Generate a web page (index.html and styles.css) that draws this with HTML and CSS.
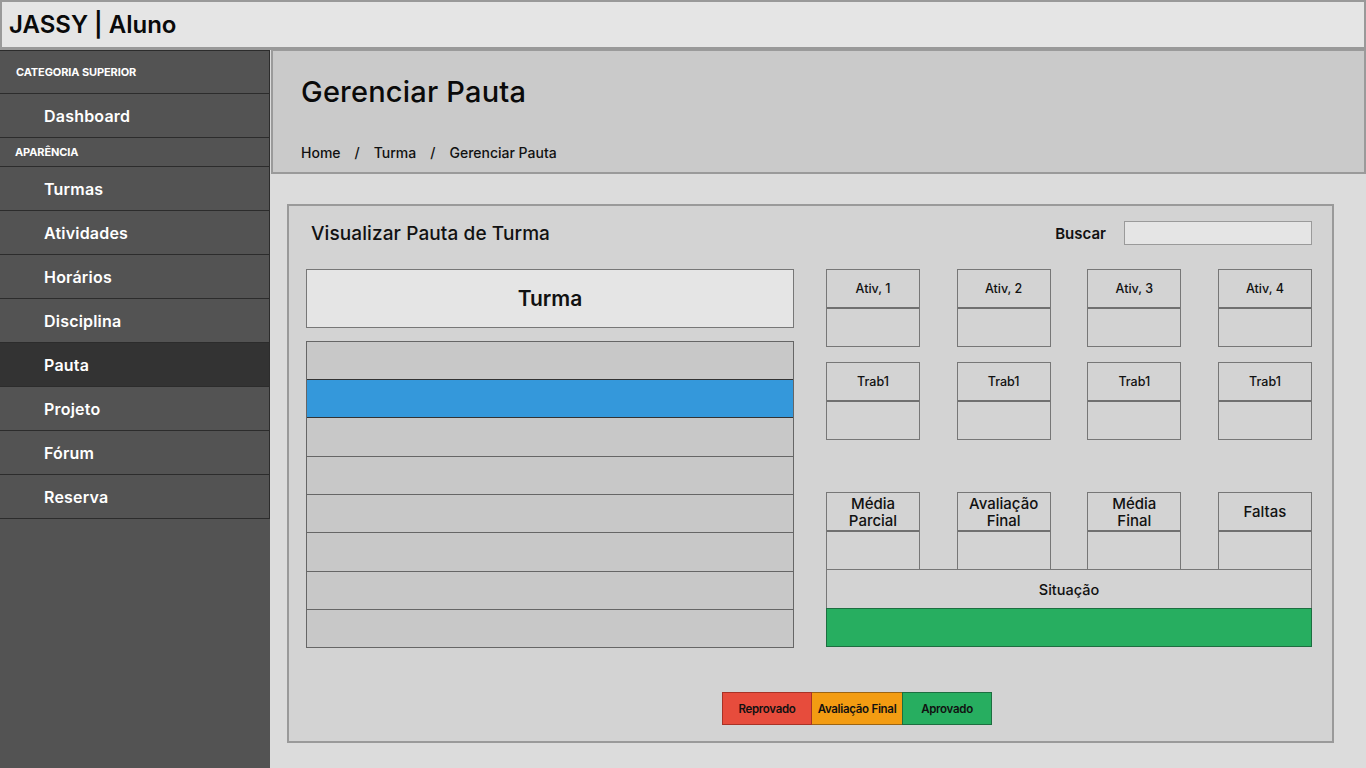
FILE: index.html
```html
<!DOCTYPE html>
<html lang="pt">
<head>
<meta charset="utf-8">
<title>JASSY | Aluno</title>
<link rel="stylesheet" href="styles.css">
</head>
<body>
<header class="topbar">JASSY | Aluno</header>
<div class="layout">
  <nav class="sidebar">
    <div class="cat cat-tall">CATEGORIA SUPERIOR</div>
    <a class="item">Dashboard</a>
    <div class="cat">APARÊNCIA</div>
    <a class="item">Turmas</a>
    <a class="item">Atividades</a>
    <a class="item">Horários</a>
    <a class="item">Disciplina</a>
    <a class="item active">Pauta</a>
    <a class="item">Projeto</a>
    <a class="item">Fórum</a>
    <a class="item">Reserva</a>
  </nav>
  <main class="main">
    <section class="page-head">
      <h1 class="page-title">Gerenciar Pauta</h1>
      <div class="crumbs"><span>Home</span><span class="sep">/</span><span>Turma</span><span class="sep">/</span><span>Gerenciar Pauta</span></div>
    </section>
    <section class="card">
      <div class="card-head">
        <h2 class="card-title">Visualizar Pauta de Turma</h2>
        <label class="search">Buscar <span class="search-input"></span></label>
      </div>
      <div class="card-body">
        <div class="left">
          <div class="turma-head">Turma</div>
          <div class="list">
            <div class="row"></div>
            <div class="row selected"></div>
            <div class="row"></div>
            <div class="row"></div>
            <div class="row"></div>
            <div class="row"></div>
            <div class="row"></div>
            <div class="row"></div>
          </div>
        </div>
        <div class="right">
          <div class="cells">
            <div class="cell"><div class="cell-head">Ativ, 1</div><div class="cell-val"></div></div>
            <div class="cell"><div class="cell-head">Ativ, 2</div><div class="cell-val"></div></div>
            <div class="cell"><div class="cell-head">Ativ, 3</div><div class="cell-val"></div></div>
            <div class="cell"><div class="cell-head">Ativ, 4</div><div class="cell-val"></div></div>
          </div>
          <div class="cells cells-2">
            <div class="cell"><div class="cell-head">Trab1</div><div class="cell-val"></div></div>
            <div class="cell"><div class="cell-head">Trab1</div><div class="cell-val"></div></div>
            <div class="cell"><div class="cell-head">Trab1</div><div class="cell-val"></div></div>
            <div class="cell"><div class="cell-head">Trab1</div><div class="cell-val"></div></div>
          </div>
          <div class="cells cells-3">
            <div class="cell"><div class="cell-head big">Média<br>Parcial</div><div class="cell-val"></div></div>
            <div class="cell"><div class="cell-head big">Avaliação<br>Final</div><div class="cell-val"></div></div>
            <div class="cell"><div class="cell-head big">Média<br>Final</div><div class="cell-val"></div></div>
            <div class="cell"><div class="cell-head big">Faltas</div><div class="cell-val"></div></div>
          </div>
          <div class="situacao">Situação</div>
          <div class="status status-ok"></div>
        </div>
      </div>
      <div class="legend">
        <span class="tag tag-red">Reprovado</span><span class="tag tag-orange">Avaliação Final</span><span class="tag tag-green">Aprovado</span>
      </div>
    </section>
  </main>
</div>
</body>
</html>
```
FILE: styles.css
```css
* { box-sizing: border-box; }
html, body { margin: 0; padding: 0; }
body {
  width: 1366px;
  height: 768px;
  overflow: hidden;
  background: #dcdcdc;
  font-family: "Inter", "Noto Sans", sans-serif;
  color: #111;
}
.topbar {
  height: 50px;
  background: #e5e5e5;
  border: 2px solid #999;
  border-bottom-width: 3px;
  padding-left: 7px;
  display: flex;
  align-items: center;
  font-size: 24px;
  font-weight: 600;
  color: #0a0a0a;
}
.layout {
  display: flex;
  height: 718px;
}
.sidebar {
  width: 270px;
  flex: none;
  background: #535353;
  display: flex;
  flex-direction: column;
}
.cat, .item {
  border: 1px solid #2c2c2c;
  border-left: 0;
  margin-top: -1px;
  color: #fff;
  display: flex;
  align-items: center;
  width: 270px;
}
.cat {
  height: 30px;
  padding-left: 15px;
  font-size: 11px;
  font-weight: 700;
  letter-spacing: -0.1px;
}
.cat:first-child { margin-top: 0; }
.cat-tall { height: 44px; padding-left: 16px; }
.item {
  height: 45px;
  padding-left: 44px;
  font-size: 16px;
  font-weight: 600;
  letter-spacing: 0.2px;
}
.item.active { background: #333; }
.main {
  flex: 1;
  display: flex;
  flex-direction: column;
}
.page-head {
  margin-left: 1px;
  height: 124px;
  background: #cacaca;
  border: 2px solid #9a9a9a;
  border-top-width: 1px;
  padding: 23px 0 0 28px;
}
.page-title {
  margin: 0;
  font-size: 29px;
  font-weight: 500;
  letter-spacing: 0.2px;
  line-height: 36px;
  color: #0a0a0a;
}
.crumbs {
  margin-top: 34px;
  font-size: 14px;
  font-weight: 500;
  display: flex;
  gap: 14px;
}
.card {
  margin: 30px 32px 25px 17px;
  flex: 1;
  background: #d3d3d3;
  border: 2px solid #9a9a9a;
  padding: 15px 20px 0 17px;
  display: flex;
  flex-direction: column;
}
.card-head {
  height: 24px;
  display: flex;
  align-items: center;
  justify-content: space-between;
  margin-bottom: 24px;
}
.card-title {
  margin: 0 0 0 5px;
  font-size: 19px;
  font-weight: 500;
  letter-spacing: 0.1px;
  color: #111;
}
.search {
  display: flex;
  align-items: center;
  gap: 18px;
  font-size: 15px;
  font-weight: 600;
}
.search-input {
  width: 188px;
  height: 24px;
  background: #e5e5e5;
  border: 1px solid #9a9a9a;
}
.card-body {
  display: flex;
  gap: 32px;
}
.left { width: 488px; }
.turma-head {
  height: 59px;
  background: #e5e5e5;
  border: 1px solid #777;
  display: flex;
  align-items: center;
  justify-content: center;
  font-size: 21px;
  font-weight: 600;
  margin-bottom: 13px;
}
.list {
  border: 1px solid #666;
  border-top: 0;
}
.row {
  height: 38.25px;
  background: #c8c8c8;
  border-top: 1px solid #666;
}
.row.selected { background: #3498db; border-top-color: #333; border-bottom: 1px solid #333; }
.row.selected + .row { border-top: 0; }
.right { width: 486px; display: flex; flex-direction: column; }
.cells {
  display: flex;
  justify-content: space-between;
}
.cells-2 { margin-top: 15px; }
.cells-3 { margin-top: 52px; }
.cell {
  width: 94px;
  height: 78px;
  border: 1px solid #777;
  display: flex;
  flex-direction: column;
}
.cell-head {
  height: 39px;
  border-bottom: 2px solid #707070;
  display: flex;
  align-items: center;
  justify-content: center;
  text-align: center;
  font-size: 12.5px;
  font-weight: 500;
}
.cell-head.big { font-size: 15px; line-height: 17px; }
.cell-val { flex: 1; }
.situacao {
  height: 40px;
  margin-top: -1px;
  border: 1px solid #777;
  display: flex;
  align-items: center;
  justify-content: center;
  font-size: 14.5px;
  font-weight: 500;
}
.status {
  height: 39px;
  margin-top: -1px;
  border: 1px solid #1d6e40;
}
.status-ok { background: #27ae60; }
.legend {
  margin: 44px 0 0 416px;
  display: flex;
}
.tag {
  width: 90px;
  height: 33px;
  display: flex;
  align-items: center;
  justify-content: center;
  font-size: 11.5px;
  font-weight: 600;
  letter-spacing: -0.3px;
  color: #111;
  border: 1px solid;
  white-space: nowrap;
}
.tag-red { background: #e74c3c; border-color: #a93226; }
.tag-orange { background: #f39c12; border-color: #9c6412; border-left: 0; border-right: 0; }
.tag-green { background: #27ae60; border-color: #1d6e40; }
```
